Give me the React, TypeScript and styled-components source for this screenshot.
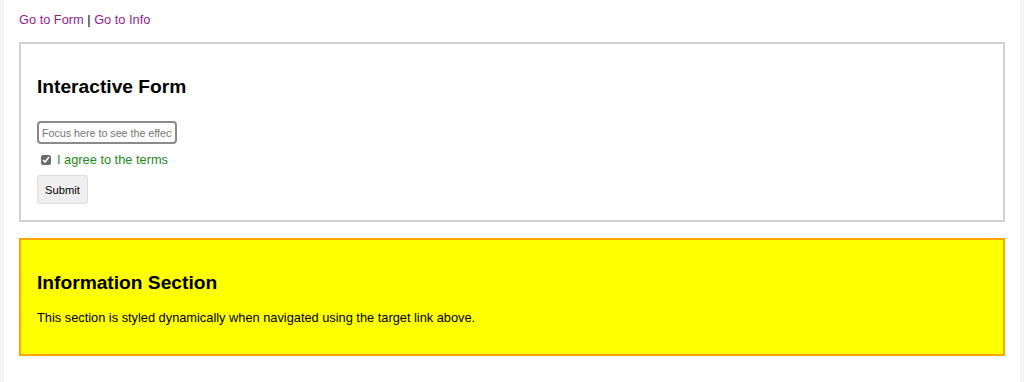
import React from "react";
import styled, { createGlobalStyle } from "styled-components";

const GlobalStyle = createGlobalStyle`
    html {
        background: #f4f4f4;
    }
    body {
        margin: 0;
        font-family: "Liberation Sans", Arial, sans-serif;
        font-size: 12.8px;
        color: #000;
    }
`;

const Page = styled.div`
    min-height: 100vh;
    margin: 0 4px;
    background: #fff;
    padding: 12px 15px 20px 15px;
    box-sizing: border-box;
`;

const Nav = styled.nav`
    line-height: 15px;
    margin-bottom: 15px;
`;

const NavLink = styled.a`
    color: #8e1e8e;
    text-decoration: none;
`;

const Panel = styled.section<{ $highlight?: boolean }>`
    border: 2px solid ${(p) => (p.$highlight ? "#ffa500" : "#d3d3d3")};
    background: ${(p) => (p.$highlight ? "#ffff00" : "#fff")};
    padding: 16px;
    & + & {
        margin-top: 16px;
    }
`;

const Title = styled.h2`
    font-size: 19.2px;
    font-weight: bold;
    margin: 16px 0;
    line-height: 22px;
`;

const Text = styled.p`
    margin: 16px 0 12.8px 0;
    line-height: 15px;
`;

const Form = styled.form`
    display: flex;
    flex-direction: column;
    align-items: flex-start;
    gap: 8px;
    margin-top: 23px;
`;

const TextInput = styled.input`
    box-sizing: border-box;
    width: 140px;
    height: 23px;
    border: 2px solid #8a8a8a;
    border-radius: 4px;
    padding: 1px 3px;
    font-family: "Liberation Sans", Arial, sans-serif;
    font-size: 10.7px;
    outline: none;

    &::placeholder {
        color: #757575;
    }
`;

const CheckRow = styled.label`
    display: flex;
    align-items: center;
    height: 15px;
    color: #1e8a1e;
    font-size: 12.8px;
`;

const Check = styled.input`
    width: 10px;
    height: 10px;
    margin: 0 6px 0 4px;
    accent-color: #6b6b6b;
`;

const SubmitButton = styled.button`
    box-sizing: border-box;
    height: 29px;
    padding: 0 7px;
    background: #efefef;
    border: 1px solid #dcdcdc;
    border-radius: 3px;
    font-family: "Liberation Sans", Arial, sans-serif;
    font-size: 11.2px;
    color: #000;
`;

const App = () => {
    const [agreed, setAgreed] = React.useState(true);
    const [value, setValue] = React.useState("");

    return (
        <>
            <GlobalStyle />
            <Page>
                <Nav>
                    <NavLink href="#form">Go to Form</NavLink> | <NavLink href="#info">Go to Info</NavLink>
                </Nav>
                <Panel id="form">
                    <Title>Interactive Form</Title>
                    <Form onSubmit={(e) => e.preventDefault()}>
                        <TextInput
                            type="text"
                            placeholder="Focus here to see the effect"
                            value={value}
                            onChange={(e) => setValue(e.target.value)}
                        />
                        <CheckRow>
                            <Check type="checkbox" checked={agreed} onChange={() => setAgreed(!agreed)} />
                            I agree to the terms
                        </CheckRow>
                        <SubmitButton type="submit">Submit</SubmitButton>
                    </Form>
                </Panel>
                <Panel id="info" $highlight>
                    <Title>Information Section</Title>
                    <Text>This section is styled dynamically when navigated using the target link above.</Text>
                </Panel>
            </Page>
        </>
    );
};

export default App;
